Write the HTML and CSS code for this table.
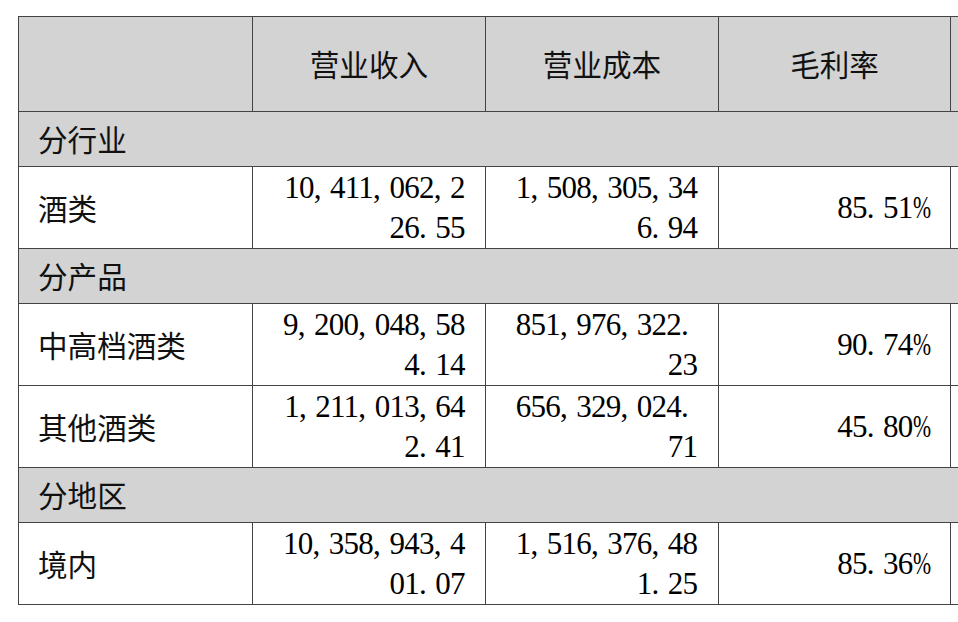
FILE: index.html
```html
<!DOCTYPE html>
<html lang="zh-CN">
<head>
<meta charset="utf-8">
<title>主营业务分行业、分产品、分地区情况</title>
<link rel="stylesheet" href="styles.css">
</head>
<body>
<table class="fin">
  <colgroup>
    <col class="c1"><col class="c2"><col class="c3"><col class="c4"><col class="c5">
  </colgroup>
  <tr class="head">
    <th></th>
    <th>营业收入</th>
    <th>营业成本</th>
    <th>毛利率</th>
    <th></th>
  </tr>
  <tr class="cat">
    <td colspan="5">分行业</td>
  </tr>
  <tr class="data">
    <td class="name">酒类</td>
    <td class="num">10<span class="p">,</span>411<span class="p">,</span>062<span class="p">,</span>2<br>26<span class="p">.</span>55</td>
    <td class="num">1<span class="p">,</span>508<span class="p">,</span>305<span class="p">,</span>34<br>6<span class="p">.</span>94</td>
    <td class="num">85<span class="p">.</span>51<span class="pct">%</span></td>
    <td></td>
  </tr>
  <tr class="cat">
    <td colspan="5">分产品</td>
  </tr>
  <tr class="data">
    <td class="name">中高档酒类</td>
    <td class="num">9<span class="p">,</span>200<span class="p">,</span>048<span class="p">,</span>58<br>4<span class="p">.</span>14</td>
    <td class="num">851<span class="p">,</span>976<span class="p">,</span>322<span class="p">.</span><br>23</td>
    <td class="num">90<span class="p">.</span>74<span class="pct">%</span></td>
    <td></td>
  </tr>
  <tr class="data">
    <td class="name">其他酒类</td>
    <td class="num">1<span class="p">,</span>211<span class="p">,</span>013<span class="p">,</span>64<br>2<span class="p">.</span>41</td>
    <td class="num">656<span class="p">,</span>329<span class="p">,</span>024<span class="p">.</span><br>71</td>
    <td class="num">45<span class="p">.</span>80<span class="pct">%</span></td>
    <td></td>
  </tr>
  <tr class="cat">
    <td colspan="5">分地区</td>
  </tr>
  <tr class="data">
    <td class="name">境内</td>
    <td class="num">10<span class="p">,</span>358<span class="p">,</span>943<span class="p">,</span>4<br>01<span class="p">.</span>07</td>
    <td class="num">1<span class="p">,</span>516<span class="p">,</span>376<span class="p">,</span>48<br>1<span class="p">.</span>25</td>
    <td class="num">85<span class="p">.</span>36<span class="pct">%</span></td>
    <td></td>
  </tr>
</table>
</body>
</html>
```
FILE: styles.css
```css
html, body {
  margin: 0;
  padding: 0;
  background: #ffffff;
  overflow: hidden;
}
body {
  padding: 16px 0 0 18px;
  font-family: "Liberation Serif", "Noto Sans CJK SC", serif;
  font-size: 29.6px;
  color: #111;
}
.fin {
  border-collapse: collapse;
  table-layout: fixed;
  width: 1166px;
}
.c1, .c2 { width: 233px; }
.c3, .c4, .c5 { width: 232px; }
.fin th, .fin td {
  border: 1px solid #444;
  padding: 0 19px;
  line-height: 40px;
  font-weight: normal;
  vertical-align: middle;
  white-space: nowrap;
  overflow: hidden;
}
.fin th {
  text-align: center;
  font-family: "Noto Sans CJK SC", sans-serif;
}
.head { height: 95px; background: #d3d3d3; }
.cat { height: 55px; background: #d3d3d3; }
.cat td {
  font-family: "Noto Sans CJK SC", sans-serif;
  text-align: left;
}
.data { height: 82px; }
.name {
  font-family: "Noto Sans CJK SC", sans-serif;
  text-align: left;
}
.fin .num {
  text-align: right;
  font-size: 31px;
  letter-spacing: -0.75px;
  padding-right: 20.5px;
  color: #000;
}
.p { margin-right: 0.3em; }
.pct {
  display: inline-block;
  transform: scaleX(0.7);
  transform-origin: left center;
  margin-right: -0.25em;
}
```
